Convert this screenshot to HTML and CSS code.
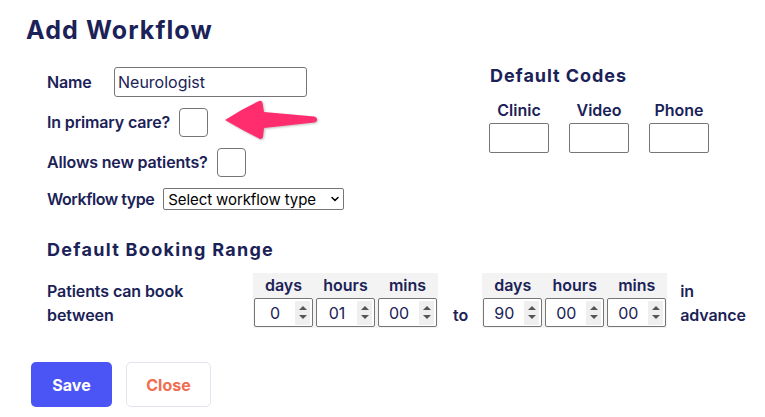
FILE: index.html
```html
<!DOCTYPE html>
<html>
<head>
<meta charset="utf-8">
<link rel="stylesheet" href="styles.css">
</head>
<body>
<div class="page">
  <h1 class="title">Add Workflow</h1>
  <div class="top">
    <div class="fields">
      <div class="row">
        <label class="lbl lbl-name">Name</label>
        <input class="text-input" type="text" value="Neurologist">
      </div>
      <div class="row">
        <label class="lbl">In primary care?</label>
        <input class="check" type="checkbox">
      </div>
      <div class="row">
        <label class="lbl">Allows new patients?</label>
        <input class="check" type="checkbox">
      </div>
      <div class="row row-select">
        <label class="lbl lbl-type">Workflow type</label>
        <span class="select-wrap">
          <select class="select"><option>Select workflow type</option></select>
          <svg class="chev" width="8" height="6" viewBox="0 0 8 6"><path d="M1 1.5 L4 4.5 L7 1.5" fill="none" stroke="#000" stroke-width="1.5" stroke-linecap="round" stroke-linejoin="round"/></svg>
        </span>
      </div>
    </div>
    <div class="codes">
      <h2 class="heading codes-heading">Default Codes</h2>
      <div class="code-grid">
        <span class="code-lbl">Clinic</span>
        <span class="code-lbl">Video</span>
        <span class="code-lbl">Phone</span>
        <input class="code-input" type="text">
        <input class="code-input" type="text">
        <input class="code-input" type="text">
      </div>
    </div>
  </div>

  <h2 class="heading section-heading">Default Booking Range</h2>
  <div class="range">
    <div class="range-label">Patients can book<br>between</div>
    <div class="time">
      <span class="th">days</span><span class="th">hours</span><span class="th">mins</span>
      <span class="num"><input value="0"><span class="spin"><i class="up"></i><i class="down"></i></span></span>
      <span class="num"><input value="01"><span class="spin"><i class="up"></i><i class="down"></i></span></span>
      <span class="num"><input value="00"><span class="spin"><i class="up"></i><i class="down"></i></span></span>
    </div>
    <span class="to">to</span>
    <div class="time">
      <span class="th">days</span><span class="th">hours</span><span class="th">mins</span>
      <span class="num"><input value="90"><span class="spin"><i class="up"></i><i class="down"></i></span></span>
      <span class="num"><input value="00"><span class="spin"><i class="up"></i><i class="down"></i></span></span>
      <span class="num"><input value="00"><span class="spin"><i class="up"></i><i class="down"></i></span></span>
    </div>
    <div class="range-label in-adv">in<br>advance</div>
  </div>

  <div class="actions">
    <button class="btn btn-save">Save</button>
    <button class="btn btn-close">Close</button>
  </div>

  <svg class="arrow" width="100" height="50" viewBox="0 0 100 50">
    <path d="M5 25 Q22 14 39 6 Q42 5 42.5 8 L44 17 L94 21.5 Q97 22 97 24.5 Q97 27 94 27.5 L44 33 L43 42 Q42 45 39 43.5 Q22 35 5 25 Z" fill="#ff2d6d"/>
  </svg>
</div>
</body>
</html>
```

FILE: styles.css
```css
* { box-sizing: border-box; }

body {
  margin: 0;
  background: #ffffff;
  font-family: Inter, "Noto Sans", sans-serif;
  color: #1b2257;
}

.page {
  position: relative;
  width: 765px;
  height: 417px;
  padding: 15px 0 0 26px;
}

.title {
  margin: 0;
  font-size: 25px;
  line-height: 30px;
  font-weight: 700;
  letter-spacing: 1.1px;
}

.heading {
  margin: 0;
  font-size: 18px;
  line-height: 22px;
  font-weight: 700;
  letter-spacing: 0.95px;
}

.top {
  display: grid;
  grid-template-columns: 442px auto;
  margin: 20px 0 0 21px;
}

.fields {
  display: flex;
  flex-direction: column;
  gap: 10px;
  padding-top: 2px;
}

.row {
  display: flex;
  align-items: center;
  height: 30px;
  gap: 9px;
}

.row-select {
  height: 22px;
  margin-top: 1px;
}

.lbl {
  font-size: 16px;
  font-weight: 600;
  letter-spacing: -0.15px;
}

.lbl-type {
  letter-spacing: -0.45px;
}

.lbl-name {
  width: 58px;
}

.text-input {
  width: 193px;
  height: 30px;
  margin: 0;
  padding: 0 3px;
  border: 1px solid #767676;
  border-radius: 3px;
  font-family: Inter, sans-serif;
  font-size: 16px;
  color: #1b2257;
}

.check {
  appearance: none;
  -webkit-appearance: none;
  width: 29px;
  height: 29px;
  margin: 0;
  border: 1px solid #767676;
  border-radius: 4px;
  background: #fff;
}

.select-wrap {
  position: relative;
  display: inline-block;
  height: 22px;
}

.select {
  appearance: none;
  -webkit-appearance: none;
  width: 181px;
  height: 22px;
  margin: 0;
  padding: 0 16px 0 4px;
  border: 1px solid #767676;
  border-radius: 2px;
  background: #fff;
  font-family: Inter, sans-serif;
  font-size: 15px;
  letter-spacing: -0.1px;
  color: #000;
}

.chev {
  position: absolute;
  right: 5px;
  top: 8px;
}

.codes {
  padding-left: 1px;
}

.codes-heading {
  margin-bottom: 13px;
}

.code-grid {
  display: grid;
  grid-template-columns: 60px 60px 60px;
  column-gap: 20px;
  row-gap: 3px;
  margin-left: -1px;
}

.code-lbl {
  text-align: center;
  font-size: 16px;
  font-weight: 600;
  line-height: 20px;
}

.code-input {
  width: 60px;
  height: 30px;
  margin: 0;
  border: 1px solid #767676;
  border-radius: 2px;
  background: #fff;
}

.section-heading {
  margin: 29px 0 12px 21px;
  letter-spacing: 1.3px;
}

.range {
  display: flex;
  align-items: flex-end;
  margin-left: 21px;
}

.range-label {
  width: 206px;
  font-size: 16px;
  font-weight: 600;
  letter-spacing: -0.1px;
  line-height: 24px;
  padding-bottom: 1px;
}

.in-adv {
  width: auto;
  margin-left: 13px;
}

.to {
  margin: 0 14px 0 15px;
  font-size: 16px;
  font-weight: 600;
  line-height: 24px;
  padding-bottom: 1px;
}

.time {
  display: grid;
  grid-template-columns: 59px 59px 59px;
  column-gap: 3px;
  padding: 0 1px 1px;
  background: #f3f3f3;
}

.th {
  height: 25px;
  line-height: 25px;
  text-align: center;
  font-size: 16px;
  font-weight: 600;
}

.num {
  display: flex;
  align-items: center;
  height: 29px;
  border: 1px solid #767676;
  border-radius: 2px;
  background: #fff;
}

.num input {
  width: 40px;
  border: 0;
  padding: 0;
  margin: 0;
  background: transparent;
  text-align: center;
  font-family: Inter, sans-serif;
  font-size: 16px;
  color: #1b2257;
}

.spin {
  display: flex;
  flex-direction: column;
  justify-content: center;
  align-items: center;
  gap: 5px;
  width: 15px;
  height: 24px;
  margin-left: 0;
  background: #efefef;
}

.up, .down {
  display: block;
  width: 0;
  height: 0;
  border-left: 4px solid transparent;
  border-right: 4px solid transparent;
}

.up { border-bottom: 4px solid #555; }
.down { border-top: 4px solid #555; }

.actions {
  display: flex;
  gap: 14px;
  margin: 34px 0 0 5px;
}

.btn {
  height: 45px;
  padding: 0;
  border-radius: 5px;
  font-family: Inter, sans-serif;
  font-size: 16px;
  font-weight: 700;
}

.btn-save {
  width: 81px;
  border: 0;
  background: #4b55f6;
  color: #fff;
}

.btn-close {
  width: 85px;
  border: 1px solid #e3e5ee;
  background: #fff;
  color: #f26c4f;
}

.arrow {
  position: absolute;
  left: 220px;
  top: 95px;
  filter: drop-shadow(1px 1px 1px rgba(0,0,0,0.25));
}
```
